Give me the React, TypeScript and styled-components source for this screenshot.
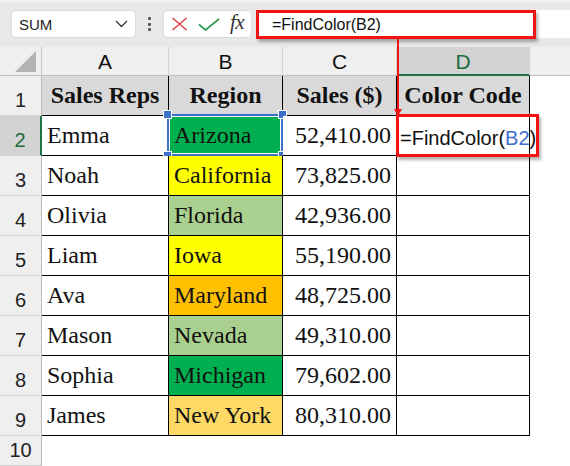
import styled, { createGlobalStyle } from 'styled-components'

const GlobalStyle = createGlobalStyle`
  html, body {
    margin: 0;
    padding: 0;
    background: #fff;
  }
  body {
    font-family: 'Liberation Sans', Arial, sans-serif;
  }
  * {
    box-sizing: border-box;
  }
`

const RED = '#f01414'
const BLUE = '#3b6fc9'
const GREEN = '#217346'

const rows = [
  { rep: 'Emma', region: 'Arizona', sales: '52,410.00', fill: '#00b050' },
  { rep: 'Noah', region: 'California', sales: '73,825.00', fill: '#ffff00' },
  { rep: 'Olivia', region: 'Florida', sales: '42,936.00', fill: '#a9d08e' },
  { rep: 'Liam', region: 'Iowa', sales: '55,190.00', fill: '#ffff00' },
  { rep: 'Ava', region: 'Maryland', sales: '48,725.00', fill: '#ffc000' },
  { rep: 'Mason', region: 'Nevada', sales: '49,310.00', fill: '#a9d08e' },
  { rep: 'Sophia', region: 'Michigan', sales: '79,602.00', fill: '#00b050' },
  { rep: 'James', region: 'New York', sales: '80,310.00', fill: '#ffd966' },
]

const App = () => {
  return (
    <>
      <GlobalStyle />
      <Page>
        <Toolbar>
          <NameBox>
            <span>SUM</span>
            <svg width="13" height="8" viewBox="0 0 13 8">
              <path d="M1 1 L6.5 6.5 L12 1" fill="none" stroke="#333" strokeWidth="1.3" />
            </svg>
          </NameBox>
          <Dots>
            <i />
            <i />
            <i />
          </Dots>
          <ButtonsBox>
            <svg width="17" height="14" viewBox="0 0 17 14">
              <path d="M1.5 1 L15.5 13 M15.5 1 L1.5 13" stroke="#e2434b" strokeWidth="1.6" />
            </svg>
            <svg width="22" height="13" viewBox="0 0 22 13">
              <path d="M1 6.5 L7.5 12 L21 1" fill="none" stroke="#2f9a50" strokeWidth="1.7" />
            </svg>
            <Fx>fx</Fx>
          </ButtonsBox>
          <FormulaField>
            <FormulaHighlight>=FindColor(B2)</FormulaHighlight>
          </FormulaField>
        </Toolbar>

        <Sheet>
          <Corner>
            <svg width="22" height="21" viewBox="0 0 22 21">
              <path d="M21 0 L21 21 L0 21 Z" fill="#b3b3b3" />
            </svg>
          </Corner>
          {['A', 'B', 'C', 'D'].map((letter) => (
            <ColHead key={letter} $active={letter === 'D'}>
              {letter}
            </ColHead>
          ))}
          <ColHead $last />

          <RowHead>1</RowHead>
          <Cell $fill="#d9d9d9" $bold $align="center">Sales Reps</Cell>
          <Cell $fill="#d9d9d9" $bold $align="center">Region</Cell>
          <Cell $fill="#d9d9d9" $bold $align="center">Sales ($)</Cell>
          <Cell $fill="#d9d9d9" $bold $align="center">Color Code</Cell>
          <Blank />

          {rows.map((row, i) => (
            <Row key={row.rep}>
              <RowHead $active={i === 0}>{i + 2}</RowHead>
              <Cell>{row.rep}</Cell>
              <Cell $fill={row.fill}>
                {row.region}
                {i === 0 && (
                  <Selection>
                    <Handle $x="left" $y="top" />
                    <Handle $x="right" $y="top" />
                    <Handle $x="left" $y="bottom" />
                    <Handle $x="right" $y="bottom" />
                  </Selection>
                )}
              </Cell>
              <Cell $align="right">{row.sales}</Cell>
              <Cell>
                {i === 0 && (
                  <EditBox>
                    =FindColor(<Ref>B2</Ref>)
                  </EditBox>
                )}
              </Cell>
              <Blank />
            </Row>
          ))}

          <RowHead>10</RowHead>
          <Blank />
          <Blank />
          <Blank />
          <Blank />
          <Blank />
        </Sheet>

        <Arrow width="12" height="80" viewBox="0 0 12 80">
          <line x1="6" y1="0" x2="6" y2="72" stroke={RED} strokeWidth="2" />
          <path d="M2 71 L10 71 L6 78 Z" fill={RED} />
        </Arrow>
      </Page>
    </>
  )
}

const Page = styled.div`
  position: relative;
  width: 570px;
  height: 466px;
  overflow: hidden;
  background: #fff;
`

const Toolbar = styled.div`
  height: 47px;
  display: flex;
  align-items: flex-start;
  padding: 7px 0 0 11px;
  background: #e8e8e8;
  border-top: 3px solid #f1f1f1;
`

const NameBox = styled.div`
  width: 125px;
  height: 28px;
  display: flex;
  align-items: center;
  justify-content: space-between;
  padding: 0 7px 0 7px;
  background: #fff;
  border: 1px solid #dcdcdc;
  border-radius: 5px;
  font-size: 15px;
  color: #1e1e1e;
`

const Dots = styled.div`
  width: 27px;
  height: 28px;
  display: flex;
  flex-direction: column;
  align-items: center;
  justify-content: center;
  gap: 2.5px;

  i {
    width: 3px;
    height: 3px;
    background: #555;
    border-radius: 1px;
  }
`

const ButtonsBox = styled.div`
  width: 89px;
  height: 28px;
  display: flex;
  align-items: center;
  gap: 10px;
  padding-left: 7px;
  background: #fff;
  border: 1px solid #dcdcdc;
  border-radius: 5px;
`

const Fx = styled.span`
  font-family: 'Liberation Serif', 'Times New Roman', serif;
  font-style: italic;
  font-size: 21px;
  color: #333;
  letter-spacing: -0.5px;
  margin-top: -3px;
`

const FormulaField = styled.div`
  flex: 1;
  height: 28px;
  margin-left: 4px;
  background: #fff;
`

const FormulaHighlight = styled.div`
  width: 280px;
  height: 29px;
  display: flex;
  align-items: center;
  padding-left: 13px;
  border: 3px solid ${RED};
  box-shadow: 2px 3px 3px rgba(0, 0, 0, 0.3);
  font-size: 16px;
  color: #111;
`

const Sheet = styled.div`
  display: grid;
  grid-template-columns: 42px 127px 114px 114px 133px 40px;
  grid-template-rows: 29px repeat(9, 40px) 30px;
`

const Row = styled.div`
  display: contents;
`

const Corner = styled.div`
  display: flex;
  align-items: flex-end;
  justify-content: flex-end;
  padding: 0 4px 3px 0;
  background: #efefef;
  border-right: 1px solid #c4c4c4;
  border-bottom: 1px solid #bdbdbd;
`

const ColHead = styled.div<{ $active?: boolean; $last?: boolean }>`
  display: flex;
  align-items: flex-end;
  justify-content: center;
  padding-bottom: ${(p) => (p.$active ? '2px' : '3px')};
  background: ${(p) => (p.$active ? '#d3d3d3' : '#efefef')};
  color: ${(p) => (p.$active ? '#1d6b40' : '#111')};
  border-right: ${(p) => (p.$last ? 'none' : '1px solid #d2d2d2')};
  border-bottom: ${(p) => (p.$active ? `2px solid ${GREEN}` : '1px solid #bdbdbd')};
  font-size: 21px;
  line-height: 21px;
`

const RowHead = styled.div<{ $active?: boolean }>`
  display: flex;
  align-items: flex-end;
  justify-content: center;
  padding-bottom: 5px;
  background: ${(p) => (p.$active ? '#d3d3d3' : '#efefef')};
  color: ${(p) => (p.$active ? '#1d6b40' : '#222')};
  border-bottom: 1px solid #d2d2d2;
  border-right: ${(p) => (p.$active ? `2px solid ${GREEN}` : '1px solid #bdbdbd')};
  font-size: 20px;
  line-height: 20px;
`

const Cell = styled.div<{ $fill?: string; $bold?: boolean; $align?: 'left' | 'center' | 'right' }>`
  position: relative;
  display: flex;
  align-items: flex-end;
  justify-content: ${(p) =>
    p.$align === 'center' ? 'center' : p.$align === 'right' ? 'flex-end' : 'flex-start'};
  padding: 0 5px 8px 5px;
  background: ${(p) => p.$fill ?? '#fff'};
  border-right: 1px solid #000;
  border-bottom: 1px solid #000;
  font-family: 'Liberation Serif', 'Times New Roman', serif;
  font-size: 24px;
  line-height: 24px;
  font-weight: ${(p) => (p.$bold ? 700 : 400)};
  color: #111;
  white-space: nowrap;
`

const Blank = styled.div`
  background: #fff;
`

const Selection = styled.div`
  position: absolute;
  top: -2px;
  left: -2px;
  right: -1px;
  bottom: -1px;
  border: 2px solid ${BLUE};
  box-shadow: inset 0 0 0 1px #fff;
`

const Handle = styled.span<{ $x: 'left' | 'right'; $y: 'top' | 'bottom' }>`
  position: absolute;
  ${(p) => p.$x}: -5px;
  ${(p) => p.$y}: -5px;
  width: 7px;
  height: 7px;
  background: ${BLUE};
  outline: 1px solid #fff;
`

const EditBox = styled.div`
  position: absolute;
  top: -2px;
  left: -1px;
  width: 143px;
  height: 43px;
  z-index: 2;
  display: flex;
  align-items: flex-end;
  padding: 0 0 6px 1px;
  border: 3px solid ${RED};
  box-shadow: 2px 3px 3px rgba(0, 0, 0, 0.3);
  font-family: 'Liberation Sans', Arial, sans-serif;
  font-size: 20px;
  line-height: 20px;
  color: #111;
  white-space: nowrap;
`

const Ref = styled.span`
  color: #3d6fd1;
`

const Arrow = styled.svg`
  position: absolute;
  left: 392px;
  top: 38px;
  z-index: 3;
`

export default App
